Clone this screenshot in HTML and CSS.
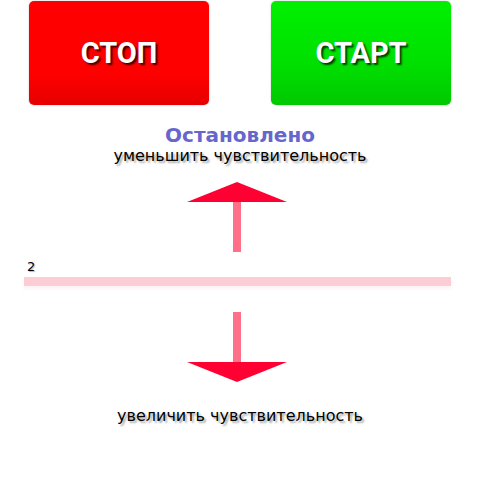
FILE: index.html
```html
<!DOCTYPE html>
<html lang="ru">
<head>
<meta charset="utf-8">
<title>Датчик</title>
<link rel="stylesheet" href="styles.css">
</head>
<body>
  <div class="controls">
    <button class="btn btn-stop">СТОП</button>
    <button class="btn btn-start">СТАРТ</button>
  </div>

  <div class="status">Остановлено</div>
  <div class="hint hint-top">уменьшить чувствительность</div>

  <svg class="arrow arrow-up" width="100" height="70" viewBox="0 0 100 70">
    <rect x="46" y="19" width="8" height="51" fill="#ff7088"/>
    <polygon points="0,20 50,0 100,20" fill="#ff0033"/>
  </svg>

  <div class="level">
    <span class="level-value">2</span>
    <div class="level-bar"></div>
  </div>

  <svg class="arrow arrow-down" width="100" height="71" viewBox="0 0 100 71">
    <rect x="46" y="0" width="8" height="51" fill="#ff7088"/>
    <polygon points="0,50 100,50 50,70" fill="#ff0033"/>
  </svg>

  <div class="hint hint-bottom">увеличить чувствительность</div>
</body>
</html>
```

FILE: styles.css
```css
html, body {
  margin: 0;
  padding: 0;
  background: #ffffff;
  width: 480px;
  height: 500px;
  overflow: hidden;
  font-family: Roboto, "Noto Sans", "Liberation Sans", sans-serif;
}

.controls {
  display: flex;
  justify-content: center;
  gap: 62px;
  padding-top: 1px;
}

.btn {
  width: 180px;
  height: 104px;
  border: none;
  border-radius: 5px;
  font-family: Roboto, "Liberation Sans", sans-serif;
  font-weight: 700;
  font-size: 29px;
  color: #ffffff;
  text-shadow: 2px 2px 2px rgba(0, 0, 0, 0.75);
  padding: 0;
  box-shadow: 0 0 2px rgba(0, 0, 0, 0.25);
}

.btn-stop {
  background: linear-gradient(#ff0000 0%, #ff0000 70%, #e60000 100%);
}

.btn-start {
  background: linear-gradient(#00f000 0%, #00e000 60%, #00c800 100%);
}

.status {
  margin-top: 18px;
  text-align: center;
  font-family: "DejaVu Sans", Roboto, sans-serif;
  font-weight: 700;
  font-size: 20px;
  line-height: 24px;
  color: #6666cc;
}

.hint {
  text-align: center;
  font-family: "DejaVu Sans", Roboto, sans-serif;
  font-size: 16px;
  line-height: 19px;
  color: #000000;
  text-shadow: 2px 2px 2px rgba(0, 0, 0, 0.35);
}

.hint-top {
  margin-top: -1px;
}

.arrow {
  display: block;
  margin-left: 187px;
}

.arrow-up {
  margin-top: 17px;
}

.level {
  padding: 7px 29px 0 24px;
}

.level-value {
  display: block;
  margin-left: 3px;
  margin-bottom: 3px;
  font-family: "DejaVu Sans", Roboto, sans-serif;
  font-size: 13px;
  line-height: 15px;
  color: #000000;
  text-shadow: 1px 1px 1px rgba(0, 0, 0, 0.3);
}

.level-bar {
  height: 9px;
  background: #fdcdd6;
  box-shadow: 0 3px 3px rgba(253, 205, 214, 0.25);
}

.arrow-down {
  margin-top: 26px;
}

.hint-bottom {
  margin-top: 23px;
}
```
